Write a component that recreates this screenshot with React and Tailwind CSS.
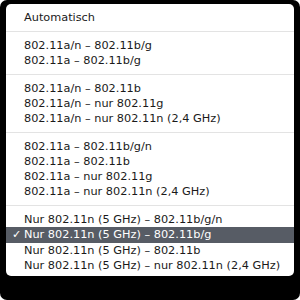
import React from 'react'

// Menu groups, separated by thin rules. `checked` marks the selected row.
const groups = [
  [{ label: 'Automatisch' }],
  [{ label: '802.11a/n – 802.11b/g' }, { label: '802.11a – 802.11b/g' }],
  [
    { label: '802.11a/n – 802.11b' },
    { label: '802.11a/n – nur 802.11g' },
    { label: '802.11a/n – nur 802.11n (2,4 GHz)' },
  ],
  [
    { label: '802.11a – 802.11b/g/n' },
    { label: '802.11a – 802.11b' },
    { label: '802.11a – nur 802.11g' },
    { label: '802.11a – nur 802.11n (2,4 GHz)' },
  ],
  [
    { label: 'Nur 802.11n (5 GHz) – 802.11b/g/n' },
    { label: 'Nur 802.11n (5 GHz) – 802.11b/g', checked: true },
    { label: 'Nur 802.11n (5 GHz) – 802.11b' },
    { label: 'Nur 802.11n (5 GHz) – nur 802.11n (2,4 GHz)' },
  ],
]

function Item({ label, checked }) {
  return (
    <div
      className={
        checked
          ? 'relative h-[16px] leading-[16px] pl-[18px] bg-[#575c65] text-white'
          : 'relative h-[15px] leading-[15px] pl-[18px] text-[#1a1a1a]'
      }
    >
      {checked && <span className="absolute left-[6px] top-0">✓</span>}
      {label}
    </div>
  )
}

export default function App() {
  return (
    <div className="w-[300px] h-[300px] bg-white">
      <div className="w-[300px] h-[300px] bg-black rounded-[7px] pl-[6px] pt-[4px]">
        <div
          className="w-[288px] h-[272px] bg-white rounded-[5px] pt-[6px] text-[11.3px] whitespace-nowrap"
          style={{ fontFamily: '"DejaVu Sans", Verdana, sans-serif' }}
        >
          {groups.map((g, i) => (
            <div key={i}>
              {i > 0 && (
                <div className="h-[13px] flex items-center">
                  <div className="w-full h-px bg-[#e3e3e3]" />
                </div>
              )}
              {g.map((it) => (
                <Item key={it.label} {...it} />
              ))}
            </div>
          ))}
        </div>
      </div>
    </div>
  )
}
